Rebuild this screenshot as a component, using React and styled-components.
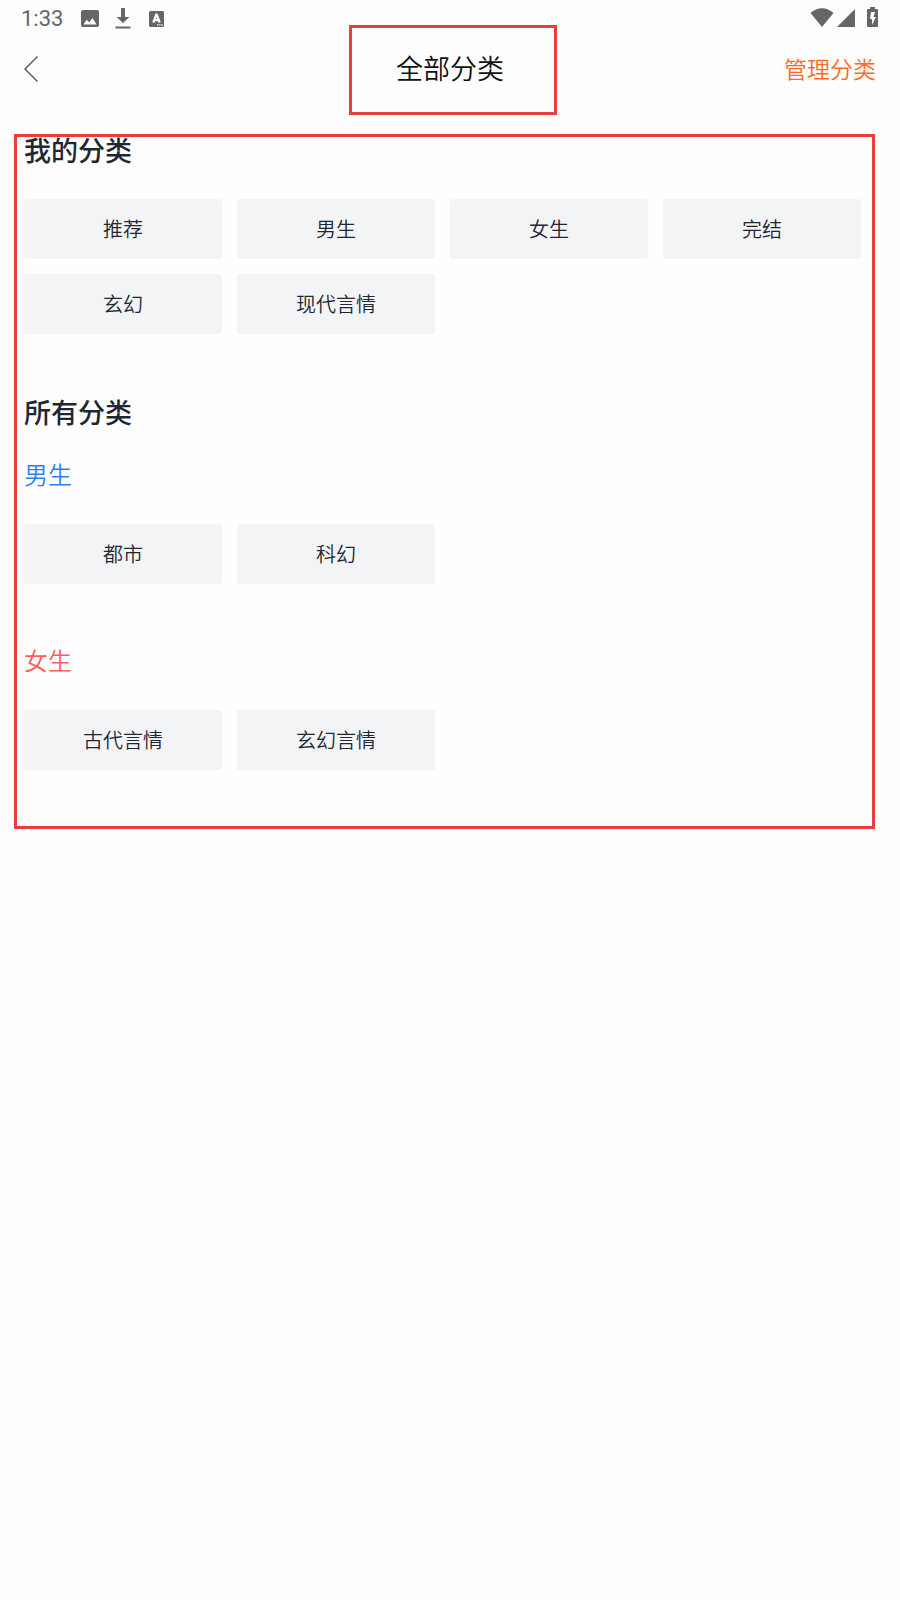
import React from 'react';
import styled, {createGlobalStyle} from 'styled-components'

const GlobalStyle = createGlobalStyle`
    * {
        box-sizing: border-box;
    }
    body {
        margin: 0;
        background: #fefefe;
        font-family: "Noto Sans CJK SC", sans-serif;
        font-weight: 350;
        color: #1f2732;
    }
    button {
        font-family: inherit;
        font-weight: inherit;
        border: 0;
        padding: 0;
        cursor: pointer;
    }
`;

const StatusBar = styled.div`
    display: flex;
    justify-content: space-between;
    height: 38px;
    padding: 0 22px 0 21px;
    color: #666;
`;

const StatusSide = styled.div`
    display: flex;
    align-items: center;
`;

const Clock = styled.time`
    font: 400 22px/38px Roboto, sans-serif;
    margin-right: 18px;
`;

const StatusIcon = styled.svg`
    display: block;
    margin-left: ${props => props.$gap || 0}px;
`;

const Header = styled.header`
    display: grid;
    grid-template-columns: 1fr auto 1fr;
    align-items: center;
    height: 60px;
    padding: 0 24px;
`;

const BackButton = styled.button`
    justify-self: start;
    background: none;
    color: #5c5c5c;

    svg {
        display: block;
    }
`;

const Title = styled.h1`
    position: relative;
    margin: 0;
    font-size: 27px;
    font-weight: inherit;
    line-height: 28px;
    color: #111;

    &::after {
        content: '';
        position: absolute;
        inset: -29px -53px -33px -47px;
        border: 3px solid #e93e3e;
        pointer-events: none;
    }
`;

const ManageButton = styled.button`
    justify-self: end;
    background: none;
    color: #ff6a22;
    font-size: 23px;
    line-height: 28px;
`;

const Main = styled.main`
    margin: 36px 25px 0 14px;
    padding: 0 11px 56px 7px;
    border: 3px solid #e93e3e;
`;

const Section = styled.section`
    & + & {
        margin-top: 65px;
    }
`;

const SectionTitle = styled.h2`
    margin: 0 0 ${props => props.$space}px;
    font-size: 27px;
    font-weight: 500;
    line-height: 25px;
`;

const Group = styled.div`
    & + & {
        margin-top: 65px;
    }
`;

const GroupTitle = styled.h3`
    margin: 0 0 39px;
    font-size: 24px;
    font-weight: inherit;
    line-height: 22px;
    color: ${props => props.$color};
`;

const ChipGrid = styled.div`
    display: grid;
    grid-template-columns: repeat(4, 1fr);
    gap: 15px;
`;

const Chip = styled.button`
    height: 60px;
    padding-bottom: 2px;
    border-radius: 3px;
    background: #f3f4f6;
    color: #1f2732;
    font-size: 20px;
`;

const myCategories = ['推荐', '男生', '女生', '完结', '玄幻', '现代言情'];

const groups = [
    {name: '男生', color: '#2f80f5', items: ['都市', '科幻']},
    {name: '女生', color: '#ff5c60', items: ['古代言情', '玄幻言情']},
];

function Chips({items}) {
    return (
        <ChipGrid>
            {items.map(item => <Chip key={item} type="button">{item}</Chip>)}
        </ChipGrid>
    )
}

function Status() {
    return (
        <StatusBar>
            <StatusSide>
                <Clock>1:33</Clock>
                <StatusIcon width="18" height="18" viewBox="0 0 18 18" aria-hidden="true">
                    <path fill="currentColor" fillRule="evenodd"
                          d="M2 0h14a2 2 0 0 1 2 2v13a2 2 0 0 1-2 2H2a2 2 0 0 1-2-2V2a2 2 0 0 1 2-2zM2.500 14.500h13L11.500 8 8.300 12.300 5.500 9.800z"/>
                </StatusIcon>
                <StatusIcon $gap={16} width="16" height="22" viewBox="0 0 16 22" aria-hidden="true">
                    <path fill="currentColor" d="M6 0h4v9h4.500L8 15 1.500 9H6zM.5 18.500h15v2H.5z"/>
                </StatusIcon>
                <StatusIcon $gap={18} width="15" height="18" viewBox="0 0 15 18" aria-hidden="true">
                    <rect width="15" height="16" y="1" rx="1.500" fill="currentColor"/>
                    <path fill="none" stroke="#fff" strokeWidth="2.200" d="M4.300 12.500 7.300 4.500h.4L10.700 12.500M5 10.200h5"/>
                    <path fill="#fff" d="M8 14.200h1.400v1.400H8zM10.200 14.200h1.400v1.400h-1.400zM12.400 14.200h1.400v1.400h-1.400z"/>
                </StatusIcon>
            </StatusSide>
            <StatusSide>
                <StatusIcon width="24" height="22" viewBox="0 0 24 22" aria-hidden="true">
                    <path fill="currentColor" d="M.5 5C7-1.300 17-1.300 23.500 5L12 19z"/>
                </StatusIcon>
                <StatusIcon $gap={3} width="18" height="20" viewBox="0 0 18 20" aria-hidden="true">
                    <path fill="currentColor" d="M18 0v18H0z"/>
                </StatusIcon>
                <StatusIcon $gap={12} width="11" height="24" viewBox="0 0 11 24" aria-hidden="true">
                    <path fill="currentColor" fillRule="evenodd"
                          d="M3 0h5v2h2a1 1 0 0 1 1 1v16a1 1 0 0 1-1 1H1a1 1 0 0 1-1-1V3a1 1 0 0 1 1-1h2zM4 5 3 12h2v6l4-8H6.500L8 5z"/>
                </StatusIcon>
            </StatusSide>
        </StatusBar>
    )
}

export default function App() {
    return (
        <>
            <GlobalStyle/>
            <Status/>
            <Header>
                <BackButton type="button" aria-label="返回">
                    <svg width="14" height="28" viewBox="0 0 14 28">
                        <path d="M13.500 2.500 1 15l12.500 12.500" fill="none" stroke="currentColor" strokeWidth="1.500"/>
                    </svg>
                </BackButton>
                <Title>全部分类</Title>
                <ManageButton type="button">管理分类</ManageButton>
            </Header>
            <Main>
                <Section>
                    <SectionTitle $space={37}>我的分类</SectionTitle>
                    <Chips items={myCategories}/>
                </Section>
                <Section>
                    <SectionTitle $space={39}>所有分类</SectionTitle>
                    {groups.map(group => (
                        <Group key={group.name}>
                            <GroupTitle $color={group.color}>{group.name}</GroupTitle>
                            <Chips items={group.items}/>
                        </Group>
                    ))}
                </Section>
            </Main>
        </>
    );
}
